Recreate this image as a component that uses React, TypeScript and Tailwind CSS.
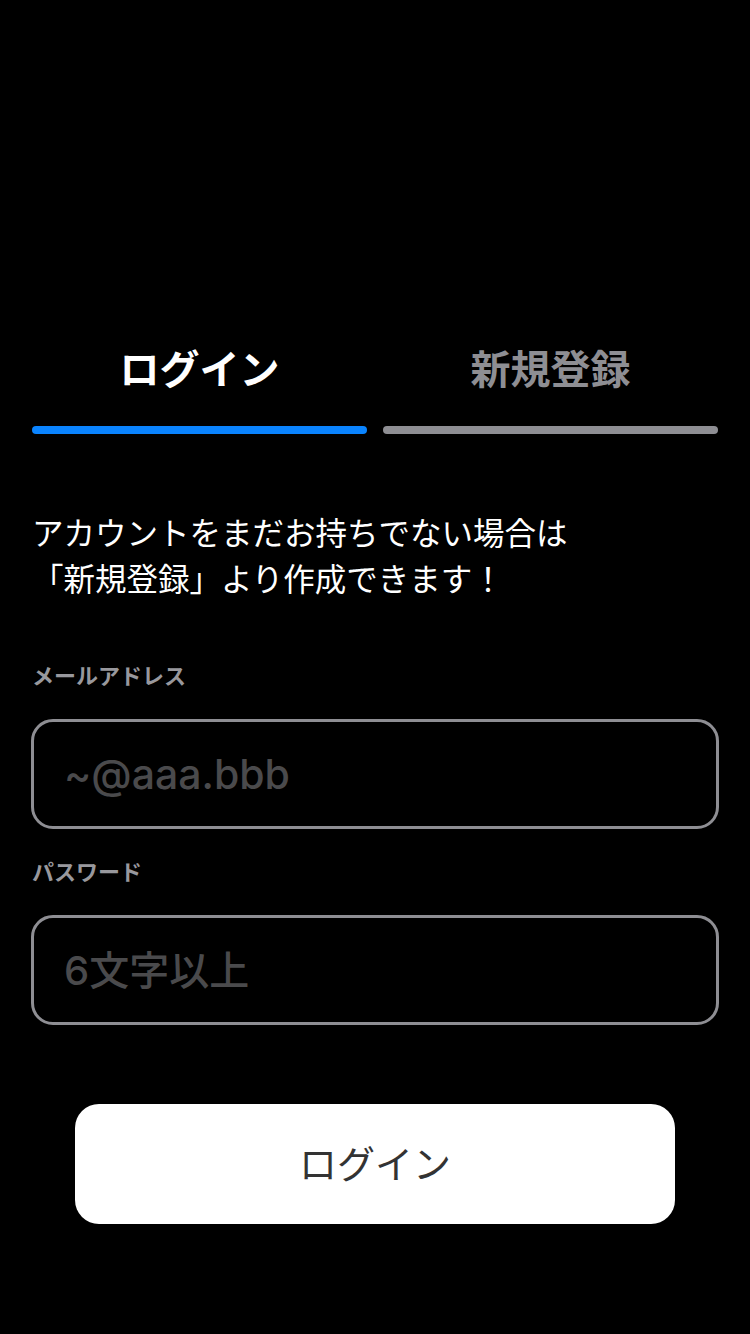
import { useState } from 'react';

const font = { fontFamily: 'Inter, "Noto Sans CJK JP", sans-serif' };

export default function App() {
  const [tab, setTab] = useState<'login' | 'signup'>('login');
  const [email, setEmail] = useState('');
  const [password, setPassword] = useState('');

  return (
    <div className="min-h-[1334px] w-full bg-black px-8 pt-[346px]" style={font}>
      {/* Tabs */}
      <div className="grid grid-cols-2 gap-4">
        <button className="flex flex-col items-center" onClick={() => setTab('login')}>
          <span
            className={`h-12 text-[40px] font-bold leading-[48px] ${
              tab === 'login' ? 'text-white' : 'text-[#8e8e93]'
            }`}
          >
            ログイン
          </span>
          <span
            className={`mt-8 h-2 w-full rounded-full ${
              tab === 'login' ? 'bg-[#0a84ff]' : 'bg-[#8e8e93]'
            }`}
          />
        </button>
        <button className="flex flex-col items-center" onClick={() => setTab('signup')}>
          <span
            className={`h-12 text-[40px] font-bold leading-[48px] ${
              tab === 'signup' ? 'text-white' : 'text-[#8e8e93]'
            }`}
          >
            新規登録
          </span>
          <span
            className={`mt-8 h-2 w-full rounded-full ${
              tab === 'signup' ? 'bg-[#0a84ff]' : 'bg-[#8e8e93]'
            }`}
          />
        </button>
      </div>

      {/* Notice */}
      <p className="mt-[77px] text-[31.5px] leading-[46px] text-white">
        アカウントをまだお持ちでない場合は
        <br />
        「新規登録」より作成できます！
      </p>

      {/* Email */}
      <label className="mt-[58px] block text-[22px] font-bold leading-[30px] text-[#98989d]">
        メールアドレス
      </label>
      <input
        type="email"
        value={email}
        onChange={(e) => setEmail(e.target.value)}
        placeholder="~@aaa.bbb"
        className="mt-[28px] -ml-px block h-[110px] w-[688px] rounded-[22px] border-[3px] border-[#8e8e93] bg-black px-[30px] text-[41px] font-medium text-white outline-none placeholder:text-[#4a4a4c]"
      />

      {/* Password */}
      <label className="mt-[28px] block text-[22px] font-bold leading-[30px] text-[#98989d]">
        パスワード
      </label>
      <input
        type="password"
        value={password}
        onChange={(e) => setPassword(e.target.value)}
        placeholder="6文字以上"
        className="mt-[28px] -ml-px block h-[110px] w-[688px] rounded-[22px] border-[3px] border-[#8e8e93] bg-black px-[30px] text-[40px] font-medium text-white outline-none placeholder:text-[#4a4a4c]"
      />

      {/* Submit */}
      <div className="mt-[79px] flex justify-center">
        <button className="h-[120px] w-[600px] rounded-[24px] bg-white text-[38px] text-[#333333]">
          ログイン
        </button>
      </div>
    </div>
  );
}
